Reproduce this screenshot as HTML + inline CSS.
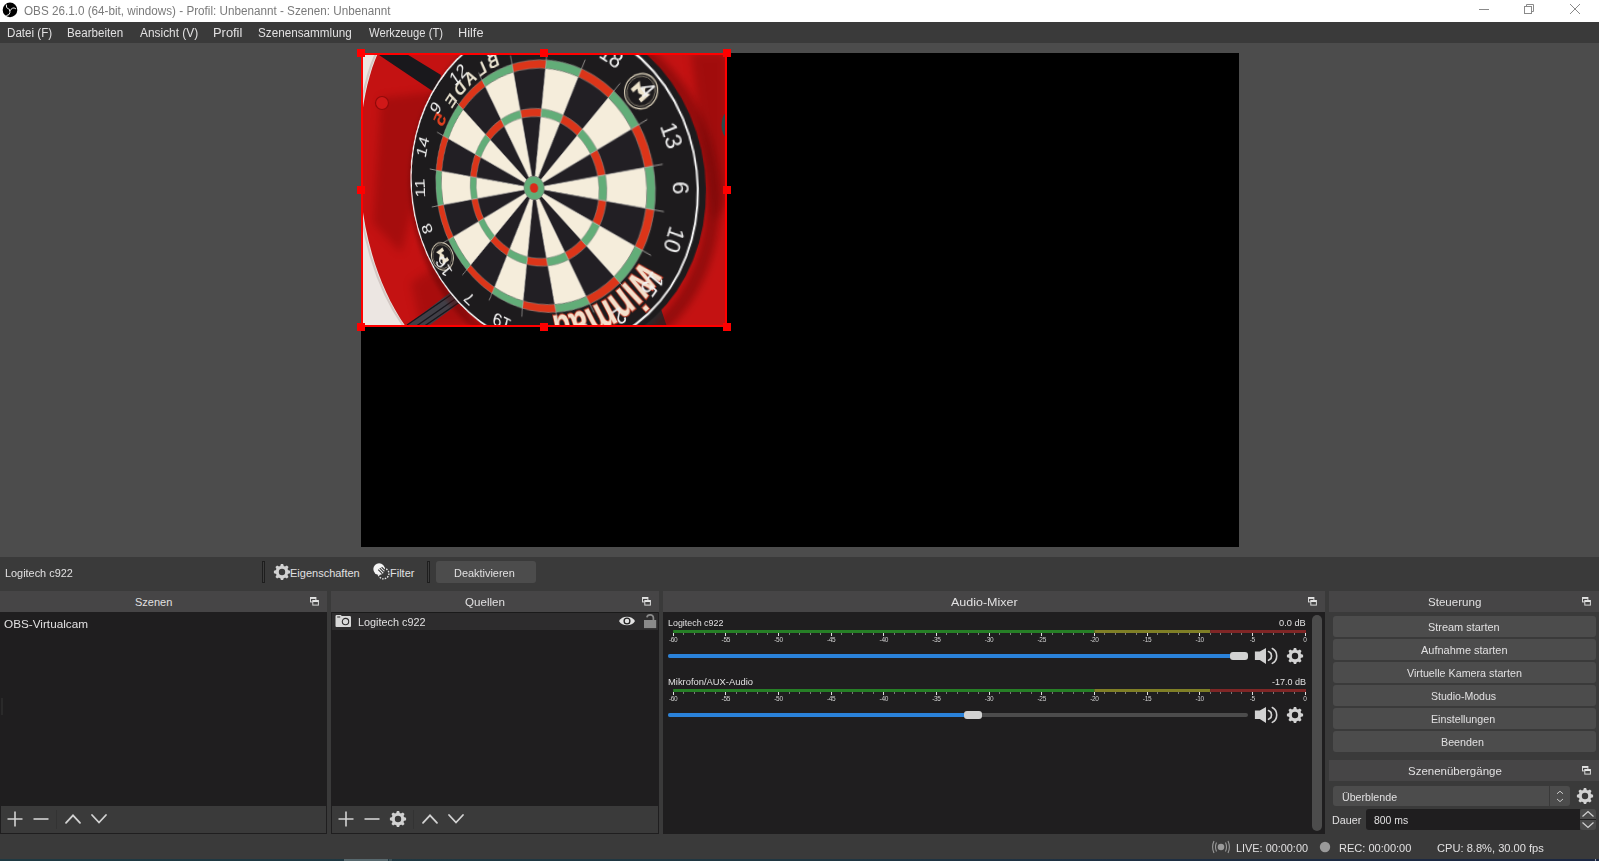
<!DOCTYPE html>
<html><head><meta charset="utf-8">
<style>
*{margin:0;padding:0;box-sizing:border-box}
html,body{width:1599px;height:861px;overflow:hidden;background:#3a3a3a;font-family:"Liberation Sans",sans-serif;color:#e1e0e1}
.a{position:absolute}
.t{position:absolute;white-space:nowrap;line-height:1;transform-origin:0 0}
svg{position:absolute;overflow:visible}
</style></head><body>
<div class="a" style="left:0px;top:0px;width:1599px;height:22px;background:#fff;"></div>
<svg style="left:0;top:0" width="24" height="22" viewBox="0 0 24 22">
<circle cx="10" cy="9.9" r="7.3" fill="#000"/>
<path d="M6.3 5 Q5.8 8.2 8.2 8.7 Q10.2 9 9.9 10.5" stroke="#fff" stroke-width="0.95" fill="none" stroke-linecap="round"/>
<path d="M15.6 8.6 Q14 7.2 12.3 8.3 Q10.8 9.4 9.9 10.5" stroke="#fff" stroke-width="0.95" fill="none" stroke-linecap="round"/>
<path d="M6.8 15.5 Q9.8 15.2 9.9 12.5 L9.9 10.5" stroke="#fff" stroke-width="0.95" fill="none" stroke-linecap="round"/>
</svg>
<svg style="left:1470px;top:0" width="129" height="22" viewBox="1470 0 129 22">
<line x1="1479" y1="9.5" x2="1489" y2="9.5" stroke="#8a8a8a" stroke-width="1"/>
<rect x="1524.5" y="6.5" width="7" height="7" fill="none" stroke="#8a8a8a" stroke-width="1"/>
<path d="M1526.5 6.5 V4.5 H1533.5 V11.5 H1531.5" fill="none" stroke="#8a8a8a" stroke-width="1"/>
<line x1="1570" y1="4" x2="1580" y2="14" stroke="#8a8a8a" stroke-width="1"/>
<line x1="1580" y1="4" x2="1570" y2="14" stroke="#8a8a8a" stroke-width="1"/>
</svg>
<div class="t" style="left:23.5px;top:5.0px;font-size:12px;color:#7a7a7a;transform:scaleX(0.974);">OBS 26.1.0 (64-bit, windows) - Profil: Unbenannt - Szenen: Unbenannt</div>
<div class="a" style="left:0px;top:22px;width:1599px;height:21px;background:#3a3a3a;"></div>
<div class="t" style="left:7.1px;top:27.0px;font-size:12px;color:#e1e0e1;transform:scaleX(0.967);">Datei (F)</div>
<div class="t" style="left:67.3px;top:27.0px;font-size:12px;color:#e1e0e1;transform:scaleX(0.967);">Bearbeiten</div>
<div class="t" style="left:140.2px;top:27.0px;font-size:12px;color:#e1e0e1;transform:scaleX(0.991);">Ansicht (V)</div>
<div class="t" style="left:212.9px;top:27.0px;font-size:12px;color:#e1e0e1;transform:scaleX(1.073);">Profil</div>
<div class="t" style="left:258.2px;top:27.0px;font-size:12px;color:#e1e0e1;transform:scaleX(0.976);">Szenensammlung</div>
<div class="t" style="left:368.5px;top:27.0px;font-size:12px;color:#e1e0e1;transform:scaleX(0.935);">Werkzeuge (T)</div>
<div class="t" style="left:458.4px;top:27.0px;font-size:12px;color:#e1e0e1;transform:scaleX(1.061);">Hilfe</div>
<div class="a" style="left:0px;top:43px;width:1599px;height:514px;background:#4c4c4c;"></div>
<div class="a" style="left:361px;top:53px;width:878px;height:494px;background:#000;"></div>
<div class="a" style="left:361px;top:53px;width:366px;height:274px;overflow:hidden;background:#bd0f10">
<svg width="366" height="274" viewBox="0 0 366 274" style="position:absolute;left:0;top:0">
<defs>
<filter id="bl3"><feGaussianBlur stdDeviation="4"/></filter>
<filter id="bl1"><feGaussianBlur stdDeviation="1.2"/></filter>
</defs>
<rect width="366" height="274" fill="#ece6e2"/>
<path d="M17 0 C -10 60, -14 190, 45 274 L366 274 L366 0 Z" fill="#c41212"/>
<path d="M17 0 C -10 60, -14 190, 45 274" fill="none" stroke="#b9aaa6" stroke-width="2" opacity="0.5" transform="translate(-2 0)"/>
<path d="M20 45 L78 38 L62 120 L40 200 L12 170 Z" fill="#7a0606" opacity="0.4" style="filter:blur(4px)"/>
<path d="M50 230 L95 200 L110 274 L60 274 Z" fill="#7a0606" opacity="0.35" style="filter:blur(4px)"/>
<path d="M15 0 L44 0 L80 22 L76 40 L70 37 Z" fill="#19181c"/>
<circle cx="21" cy="50" r="6.5" fill="#d01818" stroke="#900a0a" stroke-width="1.2"/>
<path d="M330 0 L366 0 L366 150 L352 170 L340 80 Z" fill="#800808" opacity="0.5" style="filter:blur(4px)"/>
<path d="M44 274 L66 274 L104 246 L95 235 Z" fill="#413f47"/>
<path d="M46 272 L97 237 M54 274 L100 242 M62 274 L103 246" stroke="#18171d" stroke-width="1.4"/>
<path d="M282 274 L306 274 L300 256 L286 256 Z" fill="#2a2a2c"/>
<ellipse cx="366" cy="72" rx="5.5" ry="12" fill="#2b4a48"/>
</svg>
<div class="a" style="left:-6.60px;top:-45.50px;width:360px;height:360px;transform-origin:180px 180px;transform:perspective(604px) rotateY(-30.6deg) rotateX(-4.6deg)">
<svg width="360" height="360" viewBox="-180 -180 360 360" style="position:absolute;left:0;top:0">
<circle cx="9" cy="7" r="168" fill="none" stroke="#5a0505" stroke-width="12" opacity="0.45" style="filter:blur(3px)"/>
<circle cx="5" r="166" fill="#1d1b1d"/>
<circle cx="1" r="163" fill="none" stroke="#f6f6f6" stroke-width="1.8"/>
<g font-family="Liberation Sans" font-weight="bold"><text x="0" y="0" transform="translate(103.20 77.41) rotate(126.87) scale(1 1.3)" text-anchor="middle" font-size="34" fill="#f3e0cc" stroke="#b8321f" stroke-width="1.6" paint-order="stroke">w</text><text x="0" y="0" transform="translate(92.52 89.90) rotate(134.18) scale(1 1.3)" text-anchor="middle" font-size="34" fill="#f3e0cc" stroke="#b8321f" stroke-width="1.6" paint-order="stroke">i</text><text x="0" y="0" transform="translate(82.54 99.14) rotate(140.22) scale(1 1.3)" text-anchor="middle" font-size="34" fill="#f3e0cc" stroke="#b8321f" stroke-width="1.6" paint-order="stroke">n</text><text x="0" y="0" transform="translate(62.77 112.70) rotate(150.88) scale(1 1.3)" text-anchor="middle" font-size="34" fill="#f3e0cc" stroke="#b8321f" stroke-width="1.6" paint-order="stroke">m</text><text x="0" y="0" transform="translate(41.73 122.07) rotate(161.13) scale(1 1.3)" text-anchor="middle" font-size="34" fill="#f3e0cc" stroke="#b8321f" stroke-width="1.6" paint-order="stroke">a</text><text x="0" y="0" transform="translate(24.01 126.75) rotate(169.27) scale(1 1.3)" text-anchor="middle" font-size="34" fill="#f3e0cc" stroke="#b8321f" stroke-width="1.6" paint-order="stroke">u</text></g><g transform="scale(-1,1)" font-family="Liberation Sans" font-weight="bold"><text x="0" y="0" transform="translate(40.22 -123.62) rotate(18.02) scale(1 1.0)" text-anchor="middle" font-size="19" fill="#e9e2cf">B</text><text x="0" y="0" transform="translate(54.79 -117.89) rotate(24.93) scale(1 1.0)" text-anchor="middle" font-size="19" fill="#e9e2cf">L</text><text x="0" y="0" transform="translate(68.56 -110.45) rotate(31.83) scale(1 1.0)" text-anchor="middle" font-size="19" fill="#e9e2cf">A</text><text x="0" y="0" transform="translate(82.16 -100.74) rotate(39.20) scale(1 1.0)" text-anchor="middle" font-size="19" fill="#e9e2cf">D</text><text x="0" y="0" transform="translate(94.05 -89.75) rotate(46.34) scale(1 1.0)" text-anchor="middle" font-size="19" fill="#e9e2cf">E</text><text x="0" y="0" transform="translate(108.93 -70.95) rotate(56.92) scale(1 1.0)" text-anchor="middle" font-size="23" fill="#e0401f">5</text></g>
<path d="M-18.46 -116.55A118 118 0 0 1 18.46 -116.55L1.85 -11.65A11.8 11.8 0 0 0 -1.85 -11.65Z" fill="#221f24"/><path d="M-12.36 -78.03A79 79 0 0 1 12.36 -78.03L11.11 -70.13A71 71 0 0 0 -11.11 -70.13Z" fill="#dc3519"/><path d="M-19.71 -124.45A126 126 0 0 1 19.71 -124.45L18.46 -116.55A118 118 0 0 0 -18.46 -116.55Z" fill="#dc3519"/><path d="M18.46 -116.55A118 118 0 0 1 53.57 -105.14L5.36 -10.51A11.8 11.8 0 0 0 1.85 -11.65Z" fill="#f5eddb"/><path d="M12.36 -78.03A79 79 0 0 1 35.87 -70.39L32.23 -63.26A71 71 0 0 0 11.11 -70.13Z" fill="#62ad78"/><path d="M19.71 -124.45A126 126 0 0 1 57.20 -112.27L53.57 -105.14A118 118 0 0 0 18.46 -116.55Z" fill="#62ad78"/><path d="M53.57 -105.14A118 118 0 0 1 83.44 -83.44L8.34 -8.34A11.8 11.8 0 0 0 5.36 -10.51Z" fill="#221f24"/><path d="M35.87 -70.39A79 79 0 0 1 55.86 -55.86L50.20 -50.20A71 71 0 0 0 32.23 -63.26Z" fill="#dc3519"/><path d="M57.20 -112.27A126 126 0 0 1 89.10 -89.10L83.44 -83.44A118 118 0 0 0 53.57 -105.14Z" fill="#dc3519"/><path d="M83.44 -83.44A118 118 0 0 1 105.14 -53.57L10.51 -5.36A11.8 11.8 0 0 0 8.34 -8.34Z" fill="#f5eddb"/><path d="M55.86 -55.86A79 79 0 0 1 70.39 -35.87L63.26 -32.23A71 71 0 0 0 50.20 -50.20Z" fill="#62ad78"/><path d="M89.10 -89.10A126 126 0 0 1 112.27 -57.20L105.14 -53.57A118 118 0 0 0 83.44 -83.44Z" fill="#62ad78"/><path d="M105.14 -53.57A118 118 0 0 1 116.55 -18.46L11.65 -1.85A11.8 11.8 0 0 0 10.51 -5.36Z" fill="#221f24"/><path d="M70.39 -35.87A79 79 0 0 1 78.03 -12.36L70.13 -11.11A71 71 0 0 0 63.26 -32.23Z" fill="#dc3519"/><path d="M112.27 -57.20A126 126 0 0 1 124.45 -19.71L116.55 -18.46A118 118 0 0 0 105.14 -53.57Z" fill="#dc3519"/><path d="M116.55 -18.46A118 118 0 0 1 116.55 18.46L11.65 1.85A11.8 11.8 0 0 0 11.65 -1.85Z" fill="#f5eddb"/><path d="M78.03 -12.36A79 79 0 0 1 78.03 12.36L70.13 11.11A71 71 0 0 0 70.13 -11.11Z" fill="#62ad78"/><path d="M124.45 -19.71A126 126 0 0 1 124.45 19.71L116.55 18.46A118 118 0 0 0 116.55 -18.46Z" fill="#62ad78"/><path d="M116.55 18.46A118 118 0 0 1 105.14 53.57L10.51 5.36A11.8 11.8 0 0 0 11.65 1.85Z" fill="#221f24"/><path d="M78.03 12.36A79 79 0 0 1 70.39 35.87L63.26 32.23A71 71 0 0 0 70.13 11.11Z" fill="#dc3519"/><path d="M124.45 19.71A126 126 0 0 1 112.27 57.20L105.14 53.57A118 118 0 0 0 116.55 18.46Z" fill="#dc3519"/><path d="M105.14 53.57A118 118 0 0 1 83.44 83.44L8.34 8.34A11.8 11.8 0 0 0 10.51 5.36Z" fill="#f5eddb"/><path d="M70.39 35.87A79 79 0 0 1 55.86 55.86L50.20 50.20A71 71 0 0 0 63.26 32.23Z" fill="#62ad78"/><path d="M112.27 57.20A126 126 0 0 1 89.10 89.10L83.44 83.44A118 118 0 0 0 105.14 53.57Z" fill="#62ad78"/><path d="M83.44 83.44A118 118 0 0 1 53.57 105.14L5.36 10.51A11.8 11.8 0 0 0 8.34 8.34Z" fill="#221f24"/><path d="M55.86 55.86A79 79 0 0 1 35.87 70.39L32.23 63.26A71 71 0 0 0 50.20 50.20Z" fill="#dc3519"/><path d="M89.10 89.10A126 126 0 0 1 57.20 112.27L53.57 105.14A118 118 0 0 0 83.44 83.44Z" fill="#dc3519"/><path d="M53.57 105.14A118 118 0 0 1 18.46 116.55L1.85 11.65A11.8 11.8 0 0 0 5.36 10.51Z" fill="#f5eddb"/><path d="M35.87 70.39A79 79 0 0 1 12.36 78.03L11.11 70.13A71 71 0 0 0 32.23 63.26Z" fill="#62ad78"/><path d="M57.20 112.27A126 126 0 0 1 19.71 124.45L18.46 116.55A118 118 0 0 0 53.57 105.14Z" fill="#62ad78"/><path d="M18.46 116.55A118 118 0 0 1 -18.46 116.55L-1.85 11.65A11.8 11.8 0 0 0 1.85 11.65Z" fill="#221f24"/><path d="M12.36 78.03A79 79 0 0 1 -12.36 78.03L-11.11 70.13A71 71 0 0 0 11.11 70.13Z" fill="#dc3519"/><path d="M19.71 124.45A126 126 0 0 1 -19.71 124.45L-18.46 116.55A118 118 0 0 0 18.46 116.55Z" fill="#dc3519"/><path d="M-18.46 116.55A118 118 0 0 1 -53.57 105.14L-5.36 10.51A11.8 11.8 0 0 0 -1.85 11.65Z" fill="#f5eddb"/><path d="M-12.36 78.03A79 79 0 0 1 -35.87 70.39L-32.23 63.26A71 71 0 0 0 -11.11 70.13Z" fill="#62ad78"/><path d="M-19.71 124.45A126 126 0 0 1 -57.20 112.27L-53.57 105.14A118 118 0 0 0 -18.46 116.55Z" fill="#62ad78"/><path d="M-53.57 105.14A118 118 0 0 1 -83.44 83.44L-8.34 8.34A11.8 11.8 0 0 0 -5.36 10.51Z" fill="#221f24"/><path d="M-35.87 70.39A79 79 0 0 1 -55.86 55.86L-50.20 50.20A71 71 0 0 0 -32.23 63.26Z" fill="#dc3519"/><path d="M-57.20 112.27A126 126 0 0 1 -89.10 89.10L-83.44 83.44A118 118 0 0 0 -53.57 105.14Z" fill="#dc3519"/><path d="M-83.44 83.44A118 118 0 0 1 -105.14 53.57L-10.51 5.36A11.8 11.8 0 0 0 -8.34 8.34Z" fill="#f5eddb"/><path d="M-55.86 55.86A79 79 0 0 1 -70.39 35.87L-63.26 32.23A71 71 0 0 0 -50.20 50.20Z" fill="#62ad78"/><path d="M-89.10 89.10A126 126 0 0 1 -112.27 57.20L-105.14 53.57A118 118 0 0 0 -83.44 83.44Z" fill="#62ad78"/><path d="M-105.14 53.57A118 118 0 0 1 -116.55 18.46L-11.65 1.85A11.8 11.8 0 0 0 -10.51 5.36Z" fill="#221f24"/><path d="M-70.39 35.87A79 79 0 0 1 -78.03 12.36L-70.13 11.11A71 71 0 0 0 -63.26 32.23Z" fill="#dc3519"/><path d="M-112.27 57.20A126 126 0 0 1 -124.45 19.71L-116.55 18.46A118 118 0 0 0 -105.14 53.57Z" fill="#dc3519"/><path d="M-116.55 18.46A118 118 0 0 1 -116.55 -18.46L-11.65 -1.85A11.8 11.8 0 0 0 -11.65 1.85Z" fill="#f5eddb"/><path d="M-78.03 12.36A79 79 0 0 1 -78.03 -12.36L-70.13 -11.11A71 71 0 0 0 -70.13 11.11Z" fill="#62ad78"/><path d="M-124.45 19.71A126 126 0 0 1 -124.45 -19.71L-116.55 -18.46A118 118 0 0 0 -116.55 18.46Z" fill="#62ad78"/><path d="M-116.55 -18.46A118 118 0 0 1 -105.14 -53.57L-10.51 -5.36A11.8 11.8 0 0 0 -11.65 -1.85Z" fill="#221f24"/><path d="M-78.03 -12.36A79 79 0 0 1 -70.39 -35.87L-63.26 -32.23A71 71 0 0 0 -70.13 -11.11Z" fill="#dc3519"/><path d="M-124.45 -19.71A126 126 0 0 1 -112.27 -57.20L-105.14 -53.57A118 118 0 0 0 -116.55 -18.46Z" fill="#dc3519"/><path d="M-105.14 -53.57A118 118 0 0 1 -83.44 -83.44L-8.34 -8.34A11.8 11.8 0 0 0 -10.51 -5.36Z" fill="#f5eddb"/><path d="M-70.39 -35.87A79 79 0 0 1 -55.86 -55.86L-50.20 -50.20A71 71 0 0 0 -63.26 -32.23Z" fill="#62ad78"/><path d="M-112.27 -57.20A126 126 0 0 1 -89.10 -89.10L-83.44 -83.44A118 118 0 0 0 -105.14 -53.57Z" fill="#62ad78"/><path d="M-83.44 -83.44A118 118 0 0 1 -53.57 -105.14L-5.36 -10.51A11.8 11.8 0 0 0 -8.34 -8.34Z" fill="#221f24"/><path d="M-55.86 -55.86A79 79 0 0 1 -35.87 -70.39L-32.23 -63.26A71 71 0 0 0 -50.20 -50.20Z" fill="#dc3519"/><path d="M-89.10 -89.10A126 126 0 0 1 -57.20 -112.27L-53.57 -105.14A118 118 0 0 0 -83.44 -83.44Z" fill="#dc3519"/><path d="M-53.57 -105.14A118 118 0 0 1 -18.46 -116.55L-1.85 -11.65A11.8 11.8 0 0 0 -5.36 -10.51Z" fill="#f5eddb"/><path d="M-35.87 -70.39A79 79 0 0 1 -12.36 -78.03L-11.11 -70.13A71 71 0 0 0 -32.23 -63.26Z" fill="#62ad78"/><path d="M-57.20 -112.27A126 126 0 0 1 -19.71 -124.45L-18.46 -116.55A118 118 0 0 0 -53.57 -105.14Z" fill="#62ad78"/>
<circle r="11.8" fill="#62ad78"/><circle r="4.8" fill="#d92a1a"/>
<g stroke="#b8b6b2" stroke-width="0.75"><line x1="-1.85" y1="-11.65" x2="-21.12" y2="-133.34"/><line x1="1.85" y1="-11.65" x2="21.12" y2="-133.34"/><line x1="5.36" y1="-10.51" x2="61.29" y2="-120.29"/><line x1="8.34" y1="-8.34" x2="95.46" y2="-95.46"/><line x1="10.51" y1="-5.36" x2="120.29" y2="-61.29"/><line x1="11.65" y1="-1.85" x2="133.34" y2="-21.12"/><line x1="11.65" y1="1.85" x2="133.34" y2="21.12"/><line x1="10.51" y1="5.36" x2="120.29" y2="61.29"/><line x1="8.34" y1="8.34" x2="95.46" y2="95.46"/><line x1="5.36" y1="10.51" x2="61.29" y2="120.29"/><line x1="1.85" y1="11.65" x2="21.12" y2="133.34"/><line x1="-1.85" y1="11.65" x2="-21.12" y2="133.34"/><line x1="-5.36" y1="10.51" x2="-61.29" y2="120.29"/><line x1="-8.34" y1="8.34" x2="-95.46" y2="95.46"/><line x1="-10.51" y1="5.36" x2="-120.29" y2="61.29"/><line x1="-11.65" y1="1.85" x2="-133.34" y2="21.12"/><line x1="-11.65" y1="-1.85" x2="-133.34" y2="-21.12"/><line x1="-10.51" y1="-5.36" x2="-120.29" y2="-61.29"/><line x1="-8.34" y1="-8.34" x2="-95.46" y2="-95.46"/><line x1="-5.36" y1="-10.51" x2="-61.29" y2="-120.29"/></g>
<g fill="none" stroke="#8d8b88" stroke-width="0.6"><circle r="71"/><circle r="79"/><circle r="118"/><circle r="126"/><circle r="11.8"/></g>
<g transform="translate(115.0 -86.7) rotate(53)"><circle r="15.5" fill="none" stroke="#d9cfb8" stroke-width="1.2"/><circle r="13.3" fill="none" stroke="#8a8272" stroke-width="0.8"/><path d="M-8 6 L-8 -5 L-3 -2 L0 -6 L3 -2 L8 -5 L8 6 L4 6 L4 1 L0 3 L-4 1 L-4 6 Z" fill="#eee4cc"/></g><g transform="translate(-122.1 76.3) rotate(238)"><circle r="15.5" fill="none" stroke="#d9cfb8" stroke-width="1.2"/><circle r="13.3" fill="none" stroke="#8a8272" stroke-width="0.8"/><path d="M-8 6 L-8 -5 L-3 -2 L0 -6 L3 -2 L8 -5 L8 6 L4 6 L4 1 L0 3 L-4 1 L-4 6 Z" fill="#eee4cc"/></g>
<g fill="#f2f2f2" font-family="Liberation Sans" font-size="20.5"><text x="0.0" y="-149.0" transform="rotate(0 0.0 -149.0)" text-anchor="middle" dominant-baseline="central">20</text><text x="46.0" y="-141.7" transform="rotate(18 46.0 -141.7)" text-anchor="middle" dominant-baseline="central">1</text><text x="87.6" y="-120.5" transform="rotate(36 87.6 -120.5)" text-anchor="middle" dominant-baseline="central">18</text><text x="120.5" y="-87.6" transform="rotate(54 120.5 -87.6)" text-anchor="middle" dominant-baseline="central">4</text><text x="141.7" y="-46.0" transform="rotate(72 141.7 -46.0)" text-anchor="middle" dominant-baseline="central">13</text><text x="149.0" y="0.0" transform="rotate(90 149.0 0.0)" text-anchor="middle" dominant-baseline="central">6</text><text x="141.7" y="46.0" transform="rotate(108 141.7 46.0)" text-anchor="middle" dominant-baseline="central">10</text><text x="120.5" y="87.6" transform="rotate(126 120.5 87.6)" text-anchor="middle" dominant-baseline="central">15</text><text x="87.6" y="120.5" transform="rotate(144 87.6 120.5)" text-anchor="middle" dominant-baseline="central">2</text><text x="46.0" y="141.7" transform="rotate(162 46.0 141.7)" text-anchor="middle" dominant-baseline="central">17</text><text x="0.0" y="149.0" transform="rotate(180 0.0 149.0)" text-anchor="middle" dominant-baseline="central">3</text><text x="-46.0" y="141.7" transform="rotate(198 -46.0 141.7)" text-anchor="middle" dominant-baseline="central">19</text><text x="-87.6" y="120.5" transform="rotate(216 -87.6 120.5)" text-anchor="middle" dominant-baseline="central">7</text><text x="-120.5" y="87.6" transform="rotate(234 -120.5 87.6)" text-anchor="middle" dominant-baseline="central">16</text><text x="-141.7" y="46.0" transform="rotate(252 -141.7 46.0)" text-anchor="middle" dominant-baseline="central">8</text><text x="-149.0" y="0.0" transform="rotate(270 -149.0 0.0)" text-anchor="middle" dominant-baseline="central">11</text><text x="-141.7" y="-46.0" transform="rotate(288 -141.7 -46.0)" text-anchor="middle" dominant-baseline="central">14</text><text x="-120.5" y="-87.6" transform="rotate(306 -120.5 -87.6)" text-anchor="middle" dominant-baseline="central">9</text><text x="-87.6" y="-120.5" transform="rotate(324 -87.6 -120.5)" text-anchor="middle" dominant-baseline="central">12</text><text x="-46.0" y="-141.7" transform="rotate(342 -46.0 -141.7)" text-anchor="middle" dominant-baseline="central">5</text></g>
</svg>
</div>
</div>
<div class="a" style="left:361px;top:53px;width:366px;height:274px;border:2px solid #f00"></div>
<div class="a" style="left:357px;top:49px;width:8px;height:8px;background:#f00"></div>
<div class="a" style="left:540px;top:49px;width:8px;height:8px;background:#f00"></div>
<div class="a" style="left:723px;top:49px;width:8px;height:8px;background:#f00"></div>
<div class="a" style="left:357px;top:186px;width:8px;height:8px;background:#f00"></div>
<div class="a" style="left:723px;top:186px;width:8px;height:8px;background:#f00"></div>
<div class="a" style="left:357px;top:323px;width:8px;height:8px;background:#f00"></div>
<div class="a" style="left:540px;top:323px;width:8px;height:8px;background:#f00"></div>
<div class="a" style="left:723px;top:323px;width:8px;height:8px;background:#f00"></div>

<div class="t" style="left:4.5px;top:568.0px;font-size:11px;color:#e1e0e1;transform:scaleX(0.99);">Logitech c922</div>
<div class="a" style="left:262px;top:561px;width:3px;height:22px;background:#3d3d3d;border:1px solid #1e1e1e;"></div>
<div class="a" style="left:427px;top:561px;width:3px;height:22px;background:#3d3d3d;border:1px solid #1e1e1e;"></div>
<div class="a" style="left:436px;top:561px;width:100px;height:22px;background:#4c4c4c;border-radius:3px;"></div>
<div class="t" style="left:290.0px;top:568.0px;font-size:11px;color:#e1e0e1;transform:scaleX(1.0);">Eigenschaften</div>
<div class="t" style="left:390.0px;top:568.0px;font-size:11px;color:#e1e0e1;transform:scaleX(1.0);">Filter</div>
<div class="t" style="left:454.4px;top:568.0px;font-size:11px;color:#e1e0e1;transform:scaleX(0.993);">Deaktivieren</div>
<svg style="left:272px;top:562px" width="20" height="20" viewBox="-10 -10 20 20"><g><path d="M-1.9 -5.5 L-1.15 -8.1 L1.15 -8.1 L1.9 -5.5 Z" fill="#d2d2d2" transform="rotate(0)"/><path d="M-1.9 -5.5 L-1.15 -8.1 L1.15 -8.1 L1.9 -5.5 Z" fill="#d2d2d2" transform="rotate(45)"/><path d="M-1.9 -5.5 L-1.15 -8.1 L1.15 -8.1 L1.9 -5.5 Z" fill="#d2d2d2" transform="rotate(90)"/><path d="M-1.9 -5.5 L-1.15 -8.1 L1.15 -8.1 L1.9 -5.5 Z" fill="#d2d2d2" transform="rotate(135)"/><path d="M-1.9 -5.5 L-1.15 -8.1 L1.15 -8.1 L1.9 -5.5 Z" fill="#d2d2d2" transform="rotate(180)"/><path d="M-1.9 -5.5 L-1.15 -8.1 L1.15 -8.1 L1.9 -5.5 Z" fill="#d2d2d2" transform="rotate(225)"/><path d="M-1.9 -5.5 L-1.15 -8.1 L1.15 -8.1 L1.9 -5.5 Z" fill="#d2d2d2" transform="rotate(270)"/><path d="M-1.9 -5.5 L-1.15 -8.1 L1.15 -8.1 L1.9 -5.5 Z" fill="#d2d2d2" transform="rotate(315)"/><circle r="6.3" fill="#d2d2d2"/><circle r="3.2" fill="#3a3a3a"/></g></svg>
<svg style="left:370px;top:560px" width="24" height="24" viewBox="0 0 24 24">
<circle cx="13.6" cy="13.6" r="5.3" fill="none" stroke="#e6e6e6" stroke-width="1.4" stroke-dasharray="1.5 1.2"/>
<circle cx="9.1" cy="9.1" r="5.8" fill="#f4f4f4"/>
<g stroke="#3a3a3a" stroke-width="1.15"><line x1="8.20" y1="9.60" x2="12.44" y2="13.84"/><line x1="9.80" y1="8.20" x2="13.92" y2="12.32"/><line x1="11.60" y1="7.10" x2="14.78" y2="10.28"/></g>
</svg>
<div class="a" style="left:0px;top:591px;width:327px;height:21px;background:#464546;"></div>
<div class="a" style="left:331px;top:591px;width:328px;height:21px;background:#464546;"></div>
<div class="a" style="left:663px;top:591px;width:662px;height:21px;background:#464546;"></div>
<div class="a" style="left:1329px;top:591px;width:270px;height:21px;background:#464546;"></div>
<div class="a" style="left:0px;top:612px;width:327px;height:222px;background:#1f1e1f;"></div>
<div class="a" style="left:331px;top:612px;width:328px;height:222px;background:#1f1e1f;"></div>
<div class="a" style="left:663px;top:612px;width:662px;height:222px;background:#1f1e1f;"></div>
<svg style="left:310px;top:597px" width="10" height="10" viewBox="0 0 10 10">
<rect x="0.5" y="0.5" width="5.4" height="4.4" fill="none" stroke="#d8d8d8" stroke-width="1"/><rect x="0.5" y="0.3" width="5.4" height="1.6" fill="#e6e6e6"/>
<rect x="2.8" y="3.5" width="5.6" height="4.6" fill="#474747" stroke="#d8d8d8" stroke-width="1"/><rect x="2.8" y="3.3" width="5.6" height="1.7" fill="#e6e6e6"/>
</svg>
<svg style="left:642px;top:597px" width="10" height="10" viewBox="0 0 10 10">
<rect x="0.5" y="0.5" width="5.4" height="4.4" fill="none" stroke="#d8d8d8" stroke-width="1"/><rect x="0.5" y="0.3" width="5.4" height="1.6" fill="#e6e6e6"/>
<rect x="2.8" y="3.5" width="5.6" height="4.6" fill="#474747" stroke="#d8d8d8" stroke-width="1"/><rect x="2.8" y="3.3" width="5.6" height="1.7" fill="#e6e6e6"/>
</svg>
<svg style="left:1308px;top:597px" width="10" height="10" viewBox="0 0 10 10">
<rect x="0.5" y="0.5" width="5.4" height="4.4" fill="none" stroke="#d8d8d8" stroke-width="1"/><rect x="0.5" y="0.3" width="5.4" height="1.6" fill="#e6e6e6"/>
<rect x="2.8" y="3.5" width="5.6" height="4.6" fill="#474747" stroke="#d8d8d8" stroke-width="1"/><rect x="2.8" y="3.3" width="5.6" height="1.7" fill="#e6e6e6"/>
</svg>
<svg style="left:1582px;top:597px" width="10" height="10" viewBox="0 0 10 10">
<rect x="0.5" y="0.5" width="5.4" height="4.4" fill="none" stroke="#d8d8d8" stroke-width="1"/><rect x="0.5" y="0.3" width="5.4" height="1.6" fill="#e6e6e6"/>
<rect x="2.8" y="3.5" width="5.6" height="4.6" fill="#474747" stroke="#d8d8d8" stroke-width="1"/><rect x="2.8" y="3.3" width="5.6" height="1.7" fill="#e6e6e6"/>
</svg>
<div class="t" style="left:135.0px;top:597.0px;font-size:11px;color:#e1e0e1;transform:scaleX(1.0);">Szenen</div>
<div class="t" style="left:465.4px;top:597.0px;font-size:11px;color:#e1e0e1;transform:scaleX(1.055);">Quellen</div>
<div class="t" style="left:951.0px;top:597.0px;font-size:11px;color:#e1e0e1;transform:scaleX(1.136);">Audio-Mixer</div>
<div class="t" style="left:1428.2px;top:597.0px;font-size:11px;color:#e1e0e1;transform:scaleX(1.051);">Steuerung</div>
<div class="t" style="left:3.5px;top:619.0px;font-size:11px;color:#e1e0e1;transform:scaleX(1.068);">OBS-Virtualcam</div>
<div class="a" style="left:1px;top:698px;width:2px;height:17px;background:#2a2a2a;"></div>
<div class="a" style="left:0px;top:806px;width:327px;height:28px;background:#3a3a3a;border-left:1px solid #1f1e1f;border-right:1px solid #1f1e1f;border-bottom:1px solid #1f1e1f;"></div>
<div class="a" style="left:331px;top:806px;width:328px;height:28px;background:#3a3a3a;border-left:1px solid #1f1e1f;border-right:1px solid #1f1e1f;border-bottom:1px solid #1f1e1f;"></div>
<svg style="left:7px;top:811px" width="16" height="16" viewBox="0 0 16 16"><path d="M8 0.5V15.5M0.5 8H15.5" stroke="#d2d2d2" stroke-width="1.6"/></svg>
<svg style="left:33px;top:811px" width="16" height="16" viewBox="0 0 16 16"><path d="M0.5 8H15.5" stroke="#d2d2d2" stroke-width="1.6"/></svg>
<div class="a" style="left:56px;top:810px;width:1px;height:19px;background:#333;"></div>
<svg style="left:65px;top:811px" width="16" height="16" viewBox="0 0 16 16"><path d="M1 11.9L8 4.4L15 11.9" stroke="#d2d2d2" stroke-width="1.8" fill="none" stroke-linecap="round"/></svg>
<svg style="left:91px;top:811px" width="16" height="16" viewBox="0 0 16 16"><path d="M1 4L8 11.5L15 4" stroke="#d2d2d2" stroke-width="1.8" fill="none" stroke-linecap="round"/></svg>
<svg style="left:338px;top:811px" width="16" height="16" viewBox="0 0 16 16"><path d="M8 0.5V15.5M0.5 8H15.5" stroke="#d2d2d2" stroke-width="1.6"/></svg>
<svg style="left:364px;top:811px" width="16" height="16" viewBox="0 0 16 16"><path d="M0.5 8H15.5" stroke="#d2d2d2" stroke-width="1.6"/></svg>
<svg style="left:388px;top:809px" width="20" height="20" viewBox="-10 -10 20 20"><g><path d="M-1.9 -5.5 L-1.15 -8.1 L1.15 -8.1 L1.9 -5.5 Z" fill="#d2d2d2" transform="rotate(0)"/><path d="M-1.9 -5.5 L-1.15 -8.1 L1.15 -8.1 L1.9 -5.5 Z" fill="#d2d2d2" transform="rotate(45)"/><path d="M-1.9 -5.5 L-1.15 -8.1 L1.15 -8.1 L1.9 -5.5 Z" fill="#d2d2d2" transform="rotate(90)"/><path d="M-1.9 -5.5 L-1.15 -8.1 L1.15 -8.1 L1.9 -5.5 Z" fill="#d2d2d2" transform="rotate(135)"/><path d="M-1.9 -5.5 L-1.15 -8.1 L1.15 -8.1 L1.9 -5.5 Z" fill="#d2d2d2" transform="rotate(180)"/><path d="M-1.9 -5.5 L-1.15 -8.1 L1.15 -8.1 L1.9 -5.5 Z" fill="#d2d2d2" transform="rotate(225)"/><path d="M-1.9 -5.5 L-1.15 -8.1 L1.15 -8.1 L1.9 -5.5 Z" fill="#d2d2d2" transform="rotate(270)"/><path d="M-1.9 -5.5 L-1.15 -8.1 L1.15 -8.1 L1.9 -5.5 Z" fill="#d2d2d2" transform="rotate(315)"/><circle r="6.3" fill="#d2d2d2"/><circle r="3.2" fill="#3a3a3a"/></g></svg>
<div class="a" style="left:413px;top:810px;width:1px;height:19px;background:#333;"></div>
<svg style="left:422px;top:811px" width="16" height="16" viewBox="0 0 16 16"><path d="M1 11.9L8 4.4L15 11.9" stroke="#d2d2d2" stroke-width="1.8" fill="none" stroke-linecap="round"/></svg>
<svg style="left:448px;top:811px" width="16" height="16" viewBox="0 0 16 16"><path d="M1 4L8 11.5L15 4" stroke="#d2d2d2" stroke-width="1.8" fill="none" stroke-linecap="round"/></svg>
<div class="a" style="left:332px;top:612px;width:326px;height:18px;background:#2d2c2d;border-top:1px solid #1a1a1a;"></div>
<svg style="left:334px;top:614px" width="18" height="14" viewBox="0 0 18 14">
<path d="M1.5 2.2 Q1.5 1 2.7 1 H6.5 Q7.3 1 7.6 2 H15.8 Q17 2 17 3.2 V12.2 Q17 13 16 13 H2.5 Q1.5 13 1.5 12 Z" fill="#d8d8d8"/>
<rect x="3.2" y="2.5" width="3" height="1" fill="#2d2c2d"/>
<circle cx="11.5" cy="7.6" r="3.2" fill="#d8d8d8" stroke="#2d2c2d" stroke-width="1.1"/>
</svg>
<div class="t" style="left:357.9px;top:617.0px;font-size:11px;color:#e1e0e1;transform:scaleX(0.985);">Logitech c922</div>
<svg style="left:618px;top:614px" width="20" height="14" viewBox="0 0 20 14">
<path d="M1 7 C4 1.2, 14 1.2, 17 7 C14 12.8, 4 12.8, 1 7 Z" fill="#e1e1e1"/>
<circle cx="9" cy="7" r="2.9" fill="#e1e1e1" stroke="#1f1f1f" stroke-width="1.3"/>
</svg>
<svg style="left:643px;top:613px" width="15" height="16" viewBox="0 0 15 16">
<rect x="1" y="7" width="12.2" height="8.1" fill="#8a8a8a"/>
<path d="M3.9 4.4 Q4.2 1.8 7.2 1.8 Q10.2 1.8 10.4 4.8 V7.5" fill="none" stroke="#8a8a8a" stroke-width="1.7"/>
</svg>
<div class="t" style="left:667.8px;top:618.0px;font-size:9.5px;color:#e1e0e1;transform:scaleX(0.936)">Logitech c922</div>
<div class="t" style="left:1279.0px;top:618.0px;font-size:9.5px;color:#e1e0e1;transform:scaleX(0.971)">0.0 dB</div>
<svg style="left:0;top:0" width="1599" height="861" viewBox="0 0 1599 861">
<rect x="673.20" y="630" width="421.20" height="3" fill="#267f26"/>
<rect x="1094.40" y="630" width="115.83" height="3" fill="#7f7f26"/>
<rect x="1210.23" y="630" width="95.77" height="3" fill="#7f2626"/>
<rect x="673" y="633" width="1" height="3" fill="#e1e0e1"/>
<rect x="683" y="633" width="1" height="2" fill="#7a797a"/>
<rect x="694" y="633" width="1" height="2" fill="#7a797a"/>
<rect x="704" y="633" width="1" height="2" fill="#7a797a"/>
<rect x="715" y="633" width="1" height="2" fill="#7a797a"/>
<rect x="725" y="633" width="1" height="3" fill="#e1e0e1"/>
<rect x="736" y="633" width="1" height="2" fill="#7a797a"/>
<rect x="746" y="633" width="1" height="2" fill="#7a797a"/>
<rect x="757" y="633" width="1" height="2" fill="#7a797a"/>
<rect x="767" y="633" width="1" height="2" fill="#7a797a"/>
<rect x="778" y="633" width="1" height="3" fill="#e1e0e1"/>
<rect x="789" y="633" width="1" height="2" fill="#7a797a"/>
<rect x="799" y="633" width="1" height="2" fill="#7a797a"/>
<rect x="810" y="633" width="1" height="2" fill="#7a797a"/>
<rect x="820" y="633" width="1" height="2" fill="#7a797a"/>
<rect x="831" y="633" width="1" height="3" fill="#e1e0e1"/>
<rect x="841" y="633" width="1" height="2" fill="#7a797a"/>
<rect x="852" y="633" width="1" height="2" fill="#7a797a"/>
<rect x="862" y="633" width="1" height="2" fill="#7a797a"/>
<rect x="873" y="633" width="1" height="2" fill="#7a797a"/>
<rect x="883" y="633" width="1" height="3" fill="#e1e0e1"/>
<rect x="894" y="633" width="1" height="2" fill="#7a797a"/>
<rect x="904" y="633" width="1" height="2" fill="#7a797a"/>
<rect x="915" y="633" width="1" height="2" fill="#7a797a"/>
<rect x="925" y="633" width="1" height="2" fill="#7a797a"/>
<rect x="936" y="633" width="1" height="3" fill="#e1e0e1"/>
<rect x="946" y="633" width="1" height="2" fill="#7a797a"/>
<rect x="957" y="633" width="1" height="2" fill="#7a797a"/>
<rect x="968" y="633" width="1" height="2" fill="#7a797a"/>
<rect x="978" y="633" width="1" height="2" fill="#7a797a"/>
<rect x="989" y="633" width="1" height="3" fill="#e1e0e1"/>
<rect x="999" y="633" width="1" height="2" fill="#7a797a"/>
<rect x="1010" y="633" width="1" height="2" fill="#7a797a"/>
<rect x="1020" y="633" width="1" height="2" fill="#7a797a"/>
<rect x="1031" y="633" width="1" height="2" fill="#7a797a"/>
<rect x="1041" y="633" width="1" height="3" fill="#e1e0e1"/>
<rect x="1052" y="633" width="1" height="2" fill="#7a797a"/>
<rect x="1062" y="633" width="1" height="2" fill="#7a797a"/>
<rect x="1073" y="633" width="1" height="2" fill="#7a797a"/>
<rect x="1083" y="633" width="1" height="2" fill="#7a797a"/>
<rect x="1094" y="633" width="1" height="3" fill="#e1e0e1"/>
<rect x="1104" y="633" width="1" height="2" fill="#7a797a"/>
<rect x="1115" y="633" width="1" height="2" fill="#7a797a"/>
<rect x="1125" y="633" width="1" height="2" fill="#7a797a"/>
<rect x="1136" y="633" width="1" height="2" fill="#7a797a"/>
<rect x="1147" y="633" width="1" height="3" fill="#e1e0e1"/>
<rect x="1157" y="633" width="1" height="2" fill="#7a797a"/>
<rect x="1168" y="633" width="1" height="2" fill="#7a797a"/>
<rect x="1178" y="633" width="1" height="2" fill="#7a797a"/>
<rect x="1189" y="633" width="1" height="2" fill="#7a797a"/>
<rect x="1199" y="633" width="1" height="3" fill="#e1e0e1"/>
<rect x="1210" y="633" width="1" height="2" fill="#7a797a"/>
<rect x="1220" y="633" width="1" height="2" fill="#7a797a"/>
<rect x="1231" y="633" width="1" height="2" fill="#7a797a"/>
<rect x="1241" y="633" width="1" height="2" fill="#7a797a"/>
<rect x="1252" y="633" width="1" height="3" fill="#e1e0e1"/>
<rect x="1262" y="633" width="1" height="2" fill="#7a797a"/>
<rect x="1273" y="633" width="1" height="2" fill="#7a797a"/>
<rect x="1283" y="633" width="1" height="2" fill="#7a797a"/>
<rect x="1294" y="633" width="1" height="2" fill="#7a797a"/>
<rect x="1305" y="633" width="1" height="3" fill="#e1e0e1"/>
</svg>
<div class="t" style="left:661.2px;width:24px;text-align:center;top:636.5px;font-size:6.5px;color:#d0d0d0;letter-spacing:-0.3px">-60</div>
<div class="t" style="left:713.85px;width:24px;text-align:center;top:636.5px;font-size:6.5px;color:#d0d0d0;letter-spacing:-0.3px">-55</div>
<div class="t" style="left:766.5px;width:24px;text-align:center;top:636.5px;font-size:6.5px;color:#d0d0d0;letter-spacing:-0.3px">-50</div>
<div class="t" style="left:819.1500000000001px;width:24px;text-align:center;top:636.5px;font-size:6.5px;color:#d0d0d0;letter-spacing:-0.3px">-45</div>
<div class="t" style="left:871.8px;width:24px;text-align:center;top:636.5px;font-size:6.5px;color:#d0d0d0;letter-spacing:-0.3px">-40</div>
<div class="t" style="left:924.45px;width:24px;text-align:center;top:636.5px;font-size:6.5px;color:#d0d0d0;letter-spacing:-0.3px">-35</div>
<div class="t" style="left:977.1px;width:24px;text-align:center;top:636.5px;font-size:6.5px;color:#d0d0d0;letter-spacing:-0.3px">-30</div>
<div class="t" style="left:1029.75px;width:24px;text-align:center;top:636.5px;font-size:6.5px;color:#d0d0d0;letter-spacing:-0.3px">-25</div>
<div class="t" style="left:1082.4px;width:24px;text-align:center;top:636.5px;font-size:6.5px;color:#d0d0d0;letter-spacing:-0.3px">-20</div>
<div class="t" style="left:1135.05px;width:24px;text-align:center;top:636.5px;font-size:6.5px;color:#d0d0d0;letter-spacing:-0.3px">-15</div>
<div class="t" style="left:1187.7px;width:24px;text-align:center;top:636.5px;font-size:6.5px;color:#d0d0d0;letter-spacing:-0.3px">-10</div>
<div class="t" style="left:1240.35px;width:24px;text-align:center;top:636.5px;font-size:6.5px;color:#d0d0d0;letter-spacing:-0.3px">-5</div>
<div class="t" style="left:1293.0px;width:24px;text-align:center;top:636.5px;font-size:6.5px;color:#d0d0d0;letter-spacing:-0.3px">0</div>
<div class="a" style="left:668px;top:654px;width:580px;height:4px;background:#4c4c4c;border-radius:2px"></div>
<div class="a" style="left:668px;top:654px;width:562px;height:4px;background:#2a82da;border-radius:2px 0 0 2px"></div>
<div class="a" style="left:1230px;top:652px;width:18px;height:8px;background:#d2d2d2;border-radius:3px"></div>
<svg style="left:1254px;top:648px" width="24" height="17" viewBox="0 0 24 17">
<path d="M0.9 3.6 H5.8 L12 -0.1 V16 L5.8 11.9 H0.9 Z" fill="#d2d2d2"/>
<path d="M14.5 3.5 A4.7 4.7 0 0 1 14.5 12.3" stroke="#d2d2d2" stroke-width="1.6" fill="none" stroke-linecap="round"/>
<path d="M18.3 0.5 A8.5 8.5 0 0 1 18.3 15.4" stroke="#d2d2d2" stroke-width="1.6" fill="none" stroke-linecap="round"/>
</svg>
<svg style="left:1285px;top:646px" width="20" height="20" viewBox="-10 -10 20 20"><g><path d="M-1.9 -5.5 L-1.15 -8.1 L1.15 -8.1 L1.9 -5.5 Z" fill="#d2d2d2" transform="rotate(0)"/><path d="M-1.9 -5.5 L-1.15 -8.1 L1.15 -8.1 L1.9 -5.5 Z" fill="#d2d2d2" transform="rotate(45)"/><path d="M-1.9 -5.5 L-1.15 -8.1 L1.15 -8.1 L1.9 -5.5 Z" fill="#d2d2d2" transform="rotate(90)"/><path d="M-1.9 -5.5 L-1.15 -8.1 L1.15 -8.1 L1.9 -5.5 Z" fill="#d2d2d2" transform="rotate(135)"/><path d="M-1.9 -5.5 L-1.15 -8.1 L1.15 -8.1 L1.9 -5.5 Z" fill="#d2d2d2" transform="rotate(180)"/><path d="M-1.9 -5.5 L-1.15 -8.1 L1.15 -8.1 L1.9 -5.5 Z" fill="#d2d2d2" transform="rotate(225)"/><path d="M-1.9 -5.5 L-1.15 -8.1 L1.15 -8.1 L1.9 -5.5 Z" fill="#d2d2d2" transform="rotate(270)"/><path d="M-1.9 -5.5 L-1.15 -8.1 L1.15 -8.1 L1.9 -5.5 Z" fill="#d2d2d2" transform="rotate(315)"/><circle r="6.3" fill="#d2d2d2"/><circle r="3.2" fill="#1f1e1f"/></g></svg>
<div class="t" style="left:668.3px;top:677.0px;font-size:9.5px;color:#e1e0e1;transform:scaleX(0.987)">Mikrofon/AUX-Audio</div>
<div class="t" style="left:1272.0px;top:677.0px;font-size:9.5px;color:#e1e0e1;transform:scaleX(0.947)">-17.0 dB</div>
<svg style="left:0;top:0" width="1599" height="861" viewBox="0 0 1599 861">
<rect x="673.20" y="689" width="421.20" height="3" fill="#267f26"/>
<rect x="1094.40" y="689" width="115.83" height="3" fill="#7f7f26"/>
<rect x="1210.23" y="689" width="95.77" height="3" fill="#7f2626"/>
<rect x="673" y="692" width="1" height="3" fill="#e1e0e1"/>
<rect x="683" y="692" width="1" height="2" fill="#7a797a"/>
<rect x="694" y="692" width="1" height="2" fill="#7a797a"/>
<rect x="704" y="692" width="1" height="2" fill="#7a797a"/>
<rect x="715" y="692" width="1" height="2" fill="#7a797a"/>
<rect x="725" y="692" width="1" height="3" fill="#e1e0e1"/>
<rect x="736" y="692" width="1" height="2" fill="#7a797a"/>
<rect x="746" y="692" width="1" height="2" fill="#7a797a"/>
<rect x="757" y="692" width="1" height="2" fill="#7a797a"/>
<rect x="767" y="692" width="1" height="2" fill="#7a797a"/>
<rect x="778" y="692" width="1" height="3" fill="#e1e0e1"/>
<rect x="789" y="692" width="1" height="2" fill="#7a797a"/>
<rect x="799" y="692" width="1" height="2" fill="#7a797a"/>
<rect x="810" y="692" width="1" height="2" fill="#7a797a"/>
<rect x="820" y="692" width="1" height="2" fill="#7a797a"/>
<rect x="831" y="692" width="1" height="3" fill="#e1e0e1"/>
<rect x="841" y="692" width="1" height="2" fill="#7a797a"/>
<rect x="852" y="692" width="1" height="2" fill="#7a797a"/>
<rect x="862" y="692" width="1" height="2" fill="#7a797a"/>
<rect x="873" y="692" width="1" height="2" fill="#7a797a"/>
<rect x="883" y="692" width="1" height="3" fill="#e1e0e1"/>
<rect x="894" y="692" width="1" height="2" fill="#7a797a"/>
<rect x="904" y="692" width="1" height="2" fill="#7a797a"/>
<rect x="915" y="692" width="1" height="2" fill="#7a797a"/>
<rect x="925" y="692" width="1" height="2" fill="#7a797a"/>
<rect x="936" y="692" width="1" height="3" fill="#e1e0e1"/>
<rect x="946" y="692" width="1" height="2" fill="#7a797a"/>
<rect x="957" y="692" width="1" height="2" fill="#7a797a"/>
<rect x="968" y="692" width="1" height="2" fill="#7a797a"/>
<rect x="978" y="692" width="1" height="2" fill="#7a797a"/>
<rect x="989" y="692" width="1" height="3" fill="#e1e0e1"/>
<rect x="999" y="692" width="1" height="2" fill="#7a797a"/>
<rect x="1010" y="692" width="1" height="2" fill="#7a797a"/>
<rect x="1020" y="692" width="1" height="2" fill="#7a797a"/>
<rect x="1031" y="692" width="1" height="2" fill="#7a797a"/>
<rect x="1041" y="692" width="1" height="3" fill="#e1e0e1"/>
<rect x="1052" y="692" width="1" height="2" fill="#7a797a"/>
<rect x="1062" y="692" width="1" height="2" fill="#7a797a"/>
<rect x="1073" y="692" width="1" height="2" fill="#7a797a"/>
<rect x="1083" y="692" width="1" height="2" fill="#7a797a"/>
<rect x="1094" y="692" width="1" height="3" fill="#e1e0e1"/>
<rect x="1104" y="692" width="1" height="2" fill="#7a797a"/>
<rect x="1115" y="692" width="1" height="2" fill="#7a797a"/>
<rect x="1125" y="692" width="1" height="2" fill="#7a797a"/>
<rect x="1136" y="692" width="1" height="2" fill="#7a797a"/>
<rect x="1147" y="692" width="1" height="3" fill="#e1e0e1"/>
<rect x="1157" y="692" width="1" height="2" fill="#7a797a"/>
<rect x="1168" y="692" width="1" height="2" fill="#7a797a"/>
<rect x="1178" y="692" width="1" height="2" fill="#7a797a"/>
<rect x="1189" y="692" width="1" height="2" fill="#7a797a"/>
<rect x="1199" y="692" width="1" height="3" fill="#e1e0e1"/>
<rect x="1210" y="692" width="1" height="2" fill="#7a797a"/>
<rect x="1220" y="692" width="1" height="2" fill="#7a797a"/>
<rect x="1231" y="692" width="1" height="2" fill="#7a797a"/>
<rect x="1241" y="692" width="1" height="2" fill="#7a797a"/>
<rect x="1252" y="692" width="1" height="3" fill="#e1e0e1"/>
<rect x="1262" y="692" width="1" height="2" fill="#7a797a"/>
<rect x="1273" y="692" width="1" height="2" fill="#7a797a"/>
<rect x="1283" y="692" width="1" height="2" fill="#7a797a"/>
<rect x="1294" y="692" width="1" height="2" fill="#7a797a"/>
<rect x="1305" y="692" width="1" height="3" fill="#e1e0e1"/>
</svg>
<div class="t" style="left:661.2px;width:24px;text-align:center;top:695.5px;font-size:6.5px;color:#d0d0d0;letter-spacing:-0.3px">-60</div>
<div class="t" style="left:713.85px;width:24px;text-align:center;top:695.5px;font-size:6.5px;color:#d0d0d0;letter-spacing:-0.3px">-55</div>
<div class="t" style="left:766.5px;width:24px;text-align:center;top:695.5px;font-size:6.5px;color:#d0d0d0;letter-spacing:-0.3px">-50</div>
<div class="t" style="left:819.1500000000001px;width:24px;text-align:center;top:695.5px;font-size:6.5px;color:#d0d0d0;letter-spacing:-0.3px">-45</div>
<div class="t" style="left:871.8px;width:24px;text-align:center;top:695.5px;font-size:6.5px;color:#d0d0d0;letter-spacing:-0.3px">-40</div>
<div class="t" style="left:924.45px;width:24px;text-align:center;top:695.5px;font-size:6.5px;color:#d0d0d0;letter-spacing:-0.3px">-35</div>
<div class="t" style="left:977.1px;width:24px;text-align:center;top:695.5px;font-size:6.5px;color:#d0d0d0;letter-spacing:-0.3px">-30</div>
<div class="t" style="left:1029.75px;width:24px;text-align:center;top:695.5px;font-size:6.5px;color:#d0d0d0;letter-spacing:-0.3px">-25</div>
<div class="t" style="left:1082.4px;width:24px;text-align:center;top:695.5px;font-size:6.5px;color:#d0d0d0;letter-spacing:-0.3px">-20</div>
<div class="t" style="left:1135.05px;width:24px;text-align:center;top:695.5px;font-size:6.5px;color:#d0d0d0;letter-spacing:-0.3px">-15</div>
<div class="t" style="left:1187.7px;width:24px;text-align:center;top:695.5px;font-size:6.5px;color:#d0d0d0;letter-spacing:-0.3px">-10</div>
<div class="t" style="left:1240.35px;width:24px;text-align:center;top:695.5px;font-size:6.5px;color:#d0d0d0;letter-spacing:-0.3px">-5</div>
<div class="t" style="left:1293.0px;width:24px;text-align:center;top:695.5px;font-size:6.5px;color:#d0d0d0;letter-spacing:-0.3px">0</div>
<div class="a" style="left:668px;top:713px;width:580px;height:4px;background:#4c4c4c;border-radius:2px"></div>
<div class="a" style="left:668px;top:713px;width:296px;height:4px;background:#2a82da;border-radius:2px 0 0 2px"></div>
<div class="a" style="left:964px;top:711px;width:18px;height:8px;background:#d2d2d2;border-radius:3px"></div>
<svg style="left:1254px;top:707px" width="24" height="17" viewBox="0 0 24 17">
<path d="M0.9 3.6 H5.8 L12 -0.1 V16 L5.8 11.9 H0.9 Z" fill="#d2d2d2"/>
<path d="M14.5 3.5 A4.7 4.7 0 0 1 14.5 12.3" stroke="#d2d2d2" stroke-width="1.6" fill="none" stroke-linecap="round"/>
<path d="M18.3 0.5 A8.5 8.5 0 0 1 18.3 15.4" stroke="#d2d2d2" stroke-width="1.6" fill="none" stroke-linecap="round"/>
</svg>
<svg style="left:1285px;top:705px" width="20" height="20" viewBox="-10 -10 20 20"><g><path d="M-1.9 -5.5 L-1.15 -8.1 L1.15 -8.1 L1.9 -5.5 Z" fill="#d2d2d2" transform="rotate(0)"/><path d="M-1.9 -5.5 L-1.15 -8.1 L1.15 -8.1 L1.9 -5.5 Z" fill="#d2d2d2" transform="rotate(45)"/><path d="M-1.9 -5.5 L-1.15 -8.1 L1.15 -8.1 L1.9 -5.5 Z" fill="#d2d2d2" transform="rotate(90)"/><path d="M-1.9 -5.5 L-1.15 -8.1 L1.15 -8.1 L1.9 -5.5 Z" fill="#d2d2d2" transform="rotate(135)"/><path d="M-1.9 -5.5 L-1.15 -8.1 L1.15 -8.1 L1.9 -5.5 Z" fill="#d2d2d2" transform="rotate(180)"/><path d="M-1.9 -5.5 L-1.15 -8.1 L1.15 -8.1 L1.9 -5.5 Z" fill="#d2d2d2" transform="rotate(225)"/><path d="M-1.9 -5.5 L-1.15 -8.1 L1.15 -8.1 L1.9 -5.5 Z" fill="#d2d2d2" transform="rotate(270)"/><path d="M-1.9 -5.5 L-1.15 -8.1 L1.15 -8.1 L1.9 -5.5 Z" fill="#d2d2d2" transform="rotate(315)"/><circle r="6.3" fill="#d2d2d2"/><circle r="3.2" fill="#1f1e1f"/></g></svg>
<div class="a" style="left:1312px;top:615px;width:10px;height:216px;background:#4c4c4c;border-radius:5px;"></div>
<div class="a" style="left:1333px;top:616px;width:263px;height:21px;background:#4c4c4c;border-radius:3px;"></div>
<div class="a" style="left:1333px;top:639px;width:263px;height:21px;background:#4c4c4c;border-radius:3px;"></div>
<div class="a" style="left:1333px;top:662px;width:263px;height:21px;background:#4c4c4c;border-radius:3px;"></div>
<div class="a" style="left:1333px;top:685px;width:263px;height:21px;background:#4c4c4c;border-radius:3px;"></div>
<div class="a" style="left:1333px;top:708px;width:263px;height:21px;background:#4c4c4c;border-radius:3px;"></div>
<div class="a" style="left:1333px;top:731px;width:263px;height:21px;background:#4c4c4c;border-radius:3px;"></div>
<div class="t" style="left:1427.6px;top:622.0px;font-size:11px;color:#e1e0e1;transform:scaleX(0.992);">Stream starten</div>
<div class="t" style="left:1420.8px;top:645.0px;font-size:11px;color:#e1e0e1;transform:scaleX(0.997);">Aufnahme starten</div>
<div class="t" style="left:1406.5px;top:668.0px;font-size:11px;color:#e1e0e1;transform:scaleX(0.975);">Virtuelle Kamera starten</div>
<div class="t" style="left:1431.4px;top:691.0px;font-size:11px;color:#e1e0e1;transform:scaleX(0.959);">Studio-Modus</div>
<div class="t" style="left:1431.3px;top:714.0px;font-size:11px;color:#e1e0e1;transform:scaleX(0.971);">Einstellungen</div>
<div class="t" style="left:1441.4px;top:737.0px;font-size:11px;color:#e1e0e1;transform:scaleX(0.974);">Beenden</div>
<div class="a" style="left:1329px;top:760px;width:270px;height:21px;background:#464546;"></div>
<svg style="left:1582px;top:766px" width="10" height="10" viewBox="0 0 10 10">
<rect x="0.5" y="0.5" width="5.4" height="4.4" fill="none" stroke="#d8d8d8" stroke-width="1"/><rect x="0.5" y="0.3" width="5.4" height="1.6" fill="#e6e6e6"/>
<rect x="2.8" y="3.5" width="5.6" height="4.6" fill="#474747" stroke="#d8d8d8" stroke-width="1"/><rect x="2.8" y="3.3" width="5.6" height="1.7" fill="#e6e6e6"/>
</svg>
<div class="t" style="left:1408.4px;top:766.0px;font-size:11px;color:#e1e0e1;transform:scaleX(1.043);">Szenenübergänge</div>
<div class="a" style="left:1333px;top:786px;width:237px;height:20px;background:#4c4c4c;border-radius:3px;"></div>
<div class="a" style="left:1549px;top:786px;width:1px;height:20px;background:#3a3a3a;"></div>
<svg style="left:1553px;top:788px" width="14" height="16" viewBox="0 0 14 16">
<path d="M4 5.8L7 3.2L10 5.8M4 11L7 13.6L10 11" stroke="#c8c8c8" stroke-width="1" fill="none"/>
</svg>
<div class="t" style="left:1342.1px;top:792.0px;font-size:11px;color:#e1e0e1;transform:scaleX(0.968);">Überblende</div>
<svg style="left:1575px;top:786px" width="20" height="20" viewBox="-10 -10 20 20"><g><path d="M-1.9 -5.5 L-1.15 -8.1 L1.15 -8.1 L1.9 -5.5 Z" fill="#d2d2d2" transform="rotate(0)"/><path d="M-1.9 -5.5 L-1.15 -8.1 L1.15 -8.1 L1.9 -5.5 Z" fill="#d2d2d2" transform="rotate(45)"/><path d="M-1.9 -5.5 L-1.15 -8.1 L1.15 -8.1 L1.9 -5.5 Z" fill="#d2d2d2" transform="rotate(90)"/><path d="M-1.9 -5.5 L-1.15 -8.1 L1.15 -8.1 L1.9 -5.5 Z" fill="#d2d2d2" transform="rotate(135)"/><path d="M-1.9 -5.5 L-1.15 -8.1 L1.15 -8.1 L1.9 -5.5 Z" fill="#d2d2d2" transform="rotate(180)"/><path d="M-1.9 -5.5 L-1.15 -8.1 L1.15 -8.1 L1.9 -5.5 Z" fill="#d2d2d2" transform="rotate(225)"/><path d="M-1.9 -5.5 L-1.15 -8.1 L1.15 -8.1 L1.9 -5.5 Z" fill="#d2d2d2" transform="rotate(270)"/><path d="M-1.9 -5.5 L-1.15 -8.1 L1.15 -8.1 L1.9 -5.5 Z" fill="#d2d2d2" transform="rotate(315)"/><circle r="6.3" fill="#d2d2d2"/><circle r="3.2" fill="#3a3a3a"/></g></svg>
<div class="t" style="left:1331.7px;top:815.0px;font-size:11px;color:#e1e0e1;transform:scaleX(0.976);">Dauer</div>
<div class="a" style="left:1366px;top:809px;width:214px;height:21px;background:#1f1e1f;border-radius:3px 0 0 3px;"></div>
<div class="a" style="left:1580px;top:809px;width:16px;height:21px;background:#3a3a3a;"></div>
<div class="a" style="left:1580px;top:809px;width:16px;height:10px;background:#4a4a4a;border-radius:3px 3px 0 0;"></div>
<div class="a" style="left:1580px;top:819px;width:16px;height:1px;background:#1f1e1f;"></div>
<div class="a" style="left:1580px;top:820px;width:16px;height:10px;background:#4a4a4a;border-radius:0 0 3px 3px;"></div>
<svg style="left:1580px;top:809px" width="16" height="21" viewBox="0 0 16 21">
<path d="M2.5 7.5L8 2.5L13.5 7.5M2.5 13.5L8 18.5L13.5 13.5" stroke="#d2d2d2" stroke-width="1.2" fill="none"/>
</svg>
<div class="t" style="left:1374.3px;top:815.0px;font-size:11px;color:#e1e0e1;transform:scaleX(0.947);">800 ms</div>
<svg style="left:1210px;top:840px" width="22" height="14" viewBox="0 0 22 14">
<circle cx="11" cy="7" r="3.3" fill="#9a9a9a"/>
<path d="M6.5 2.5 Q4.5 7 6.5 11.5 M4 1 Q1.2 7 4 13 M15.5 2.5 Q17.5 7 15.5 11.5 M18 1 Q20.8 7 18 13" stroke="#9a9a9a" stroke-width="1.1" fill="none"/>
</svg>
<svg style="left:1319px;top:841px" width="12" height="12" viewBox="0 0 12 12"><circle cx="6" cy="6" r="5.2" fill="#9a9a9a"/></svg>
<div class="t" style="left:1235.8px;top:843.0px;font-size:11px;color:#e1e0e1;transform:scaleX(0.989);">LIVE: 00:00:00</div>
<div class="t" style="left:1339.4px;top:843.0px;font-size:11px;color:#e1e0e1;transform:scaleX(1.003);">REC: 00:00:00</div>
<div class="t" style="left:1437.2px;top:843.0px;font-size:11px;color:#e1e0e1;transform:scaleX(1.01);">CPU: 8.8%, 30.00 fps</div>
<div class="a" style="left:0px;top:859px;width:1599px;height:2px;background:linear-gradient(90deg,#1e3942 0%,#1f3641 50%,#1c2a42 85%,#1b2742 100%);"></div>
<div class="a" style="left:1595px;top:859px;width:1px;height:2px;background:#9aa2ad;"></div>
<div class="a" style="left:344px;top:859px;width:44px;height:2px;background:#56686e;"></div>
<div class="a" style="left:389px;top:859px;width:3px;height:2px;background:#3c5057;"></div>
</body></html>
